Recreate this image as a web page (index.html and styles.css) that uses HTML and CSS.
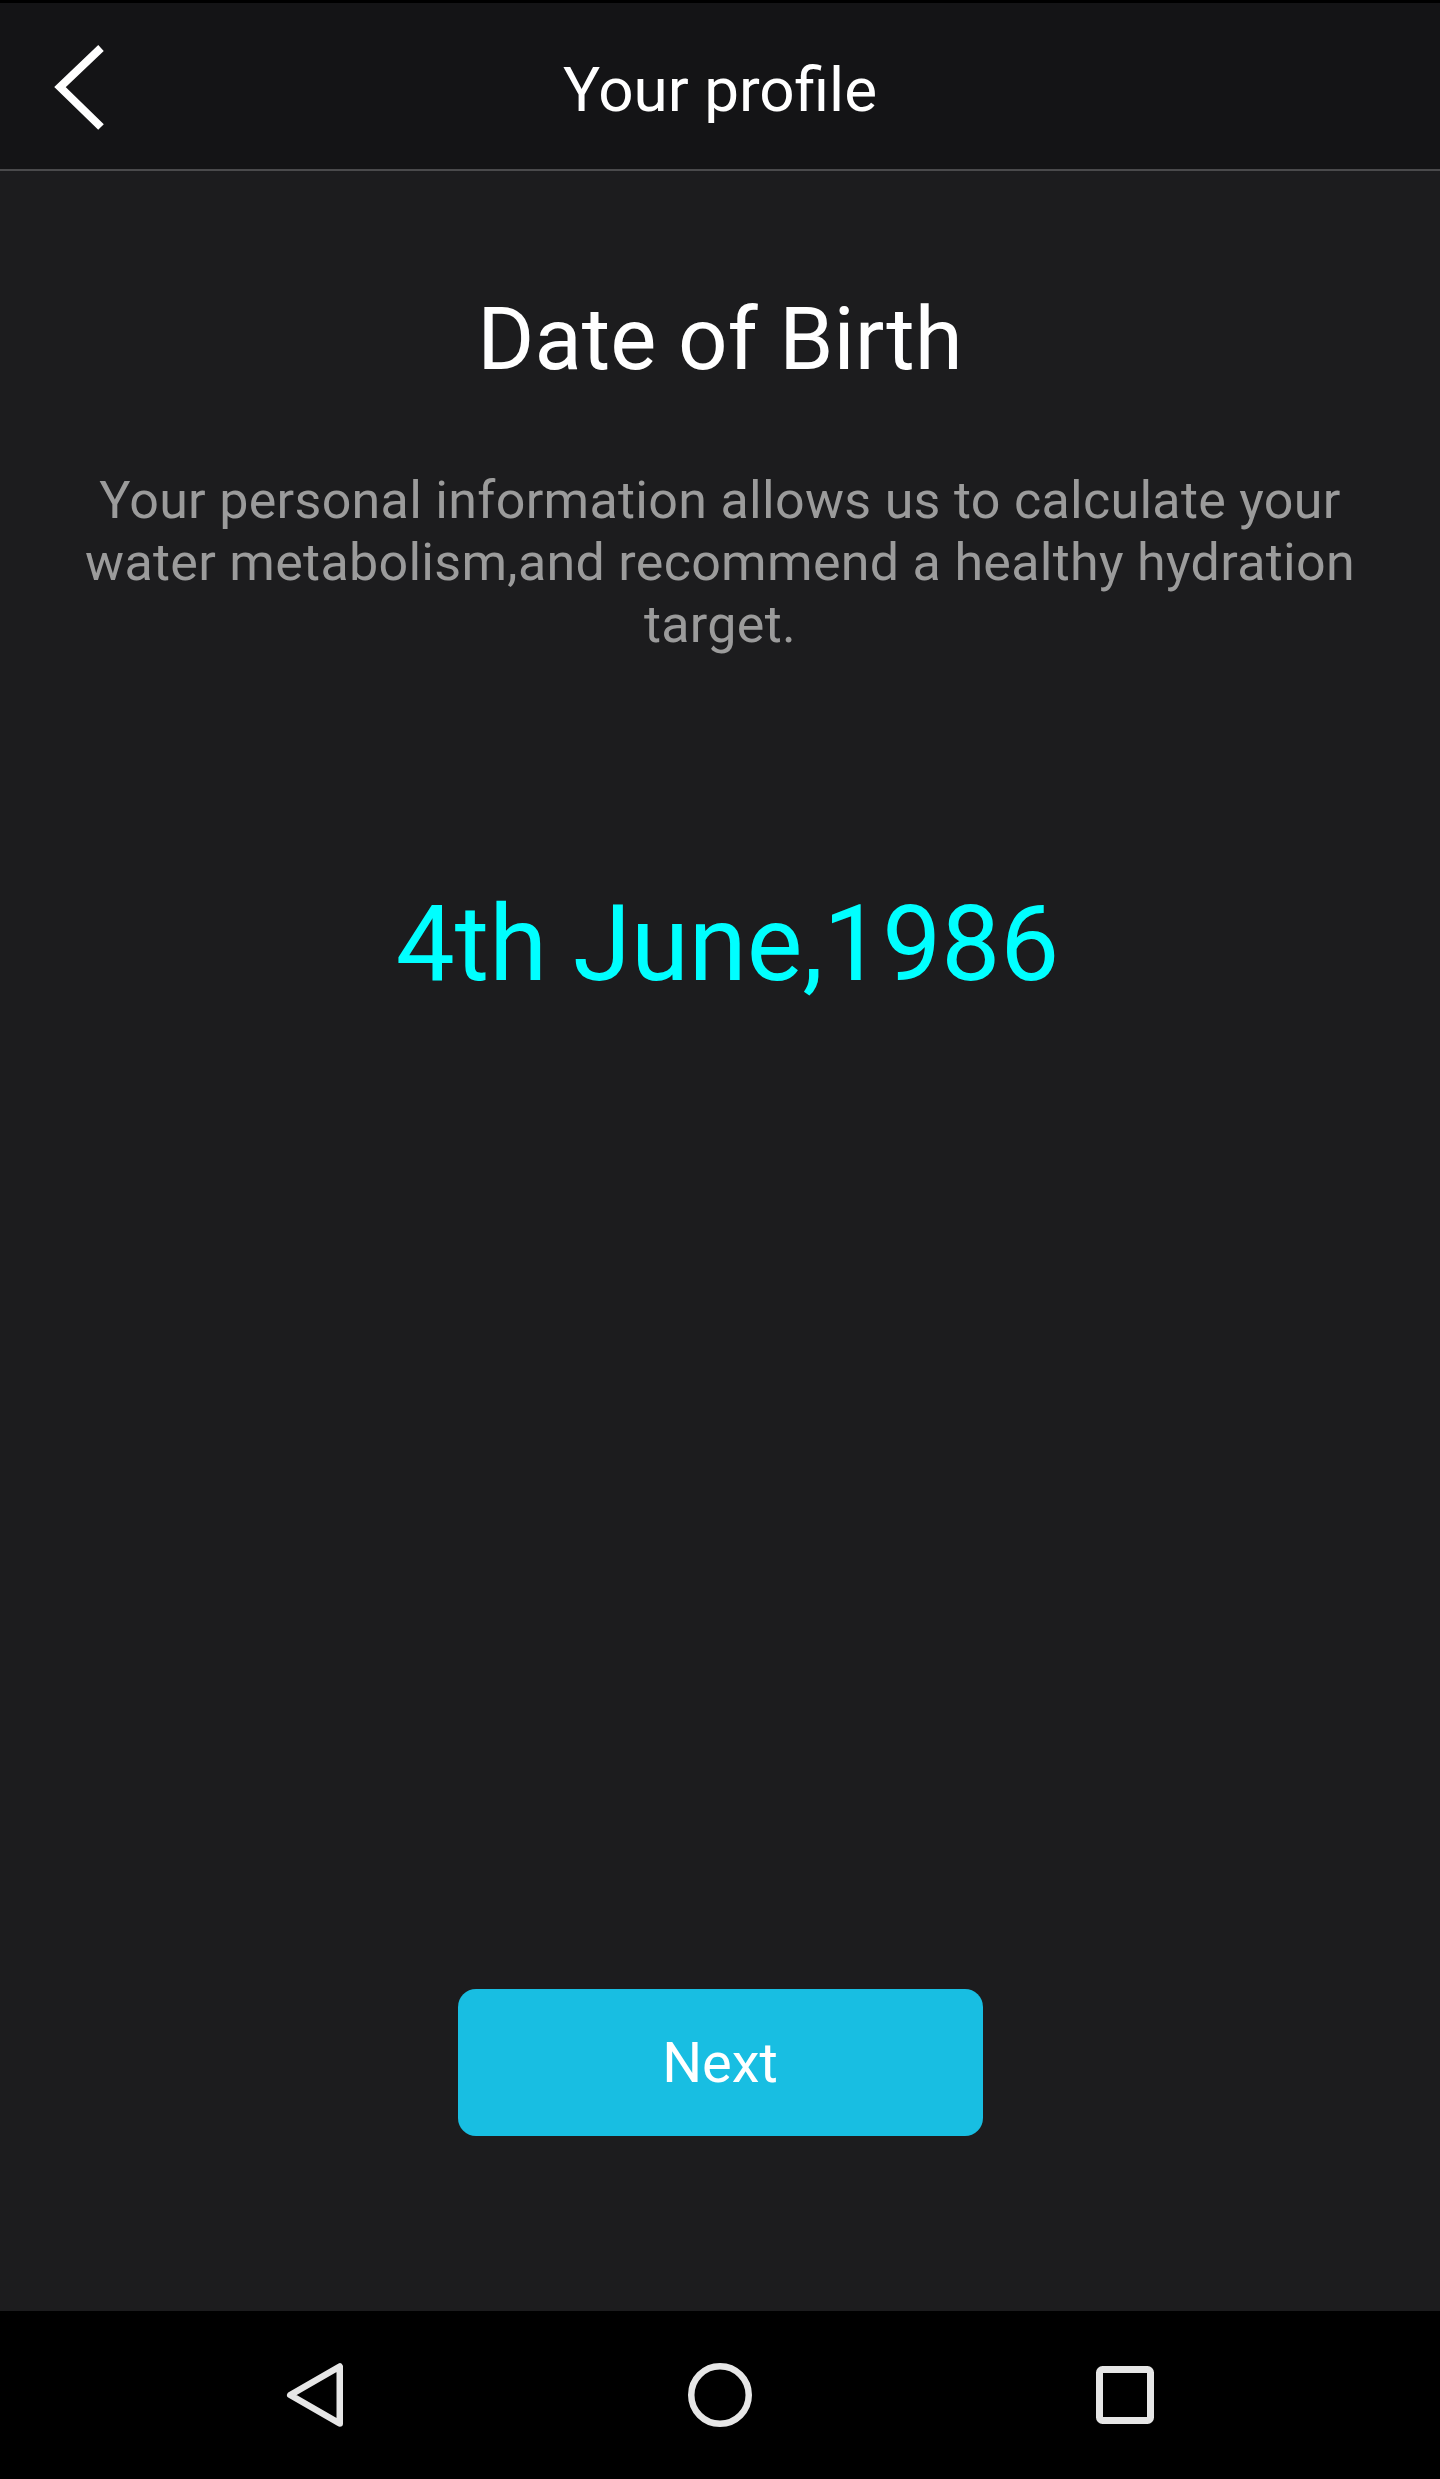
FILE: index.html
```html
<!DOCTYPE html>
<html lang="en">
<head>
<meta charset="utf-8">
<title>Your profile</title>
<link rel="stylesheet" href="styles.css">
</head>
<body>
<div class="app">
  <div class="status"></div>
  <header class="topbar">
    <svg class="back" width="70" height="100" viewBox="0 0 70 100" aria-hidden="true">
      <polyline points="54,11 13,50 54,90" fill="none" stroke="#ffffff" stroke-width="8" stroke-linecap="butt" stroke-linejoin="miter"/>
    </svg>
    <h1 class="title">Your profile</h1>
    <span class="spacer"></span>
  </header>
  <main class="content">
    <h2 class="heading">Date of Birth</h2>
    <p class="info">Your personal information allows us to calculate your water metabolism,and recommend a healthy hydration target.</p>
    <div class="date">4th June,1986</div>
    <button class="next" type="button">Next</button>
  </main>
  <nav class="navbar">
    <div class="nav-item">
      <svg width="80" height="80" viewBox="0 0 80 80" aria-hidden="true">
        <polygon points="64.75,11.5 64.75,68.5 15.25,40" fill="none" stroke="#e6e6e6" stroke-width="6.5" stroke-linejoin="round"/>
      </svg>
    </div>
    <div class="nav-item">
      <svg width="80" height="80" viewBox="0 0 80 80" aria-hidden="true">
        <circle cx="40" cy="40" r="28.75" fill="none" stroke="#e6e6e6" stroke-width="6.5"/>
      </svg>
    </div>
    <div class="nav-item">
      <svg width="80" height="80" viewBox="0 0 80 80" aria-hidden="true">
        <rect x="14.5" y="14.5" width="51" height="51" rx="3" fill="none" stroke="#e6e6e6" stroke-width="7"/>
      </svg>
    </div>
  </nav>
</div>
</body>
</html>
```

FILE: styles.css
```css
html, body {
  margin: 0;
  padding: 0;
  height: 100%;
}

body {
  background: #1c1c1e;
  font-family: Roboto, "Noto Sans", "Liberation Sans", sans-serif;
  color: #ffffff;
}

.app {
  display: flex;
  flex-direction: column;
  height: 2479px;
  width: 1440px;
}

.status {
  height: 3px;
  background: #000000;
  flex: none;
}

.topbar {
  flex: none;
  box-sizing: border-box;
  height: 168px;
  background: #141416;
  border-bottom: 2px solid #4a4a4c;
  display: grid;
  grid-template-columns: 1fr auto 1fr;
  align-items: center;
  padding-top: 6px;
}

.back {
  justify-self: start;
  align-self: start;
  margin-left: 47px;
  margin-top: 28px;
  display: block;
}

.title {
  margin: 0;
  font-size: 62px;
  font-weight: 400;
  line-height: 73px;
  color: #ffffff;
  white-space: nowrap;
}

.content {
  flex: 1;
  display: flex;
  flex-direction: column;
  align-items: center;
  background: #1c1c1e;
}

.heading {
  margin: 118px 0 0;
  font-size: 87px;
  font-weight: 400;
  line-height: 100px;
  color: #ffffff;
}

.info {
  margin: 81px 0 0;
  padding: 0 60px;
  font-size: 52px;
  letter-spacing: 0.3px;
  line-height: 62px;
  text-align: center;
  color: #9b9b9b;
}

.date {
  margin-top: 227px;
  padding-left: 15px;
  font-size: 105px;
  line-height: 124px;
  color: #00ffff;
}

.next {
  margin-top: auto;
  margin-bottom: 175px;
  width: 525px;
  height: 147px;
  border: none;
  border-radius: 18px;
  background: #18bee2;
  color: #ffffff;
  font-family: Roboto, "Noto Sans", "Liberation Sans", sans-serif;
  font-size: 56px;
  padding: 0;
}

.navbar {
  flex: none;
  height: 168px;
  background: #000000;
  display: flex;
  justify-content: center;
  align-items: center;
}

.nav-item {
  width: 405px;
  display: flex;
  justify-content: center;
  align-items: center;
}

.nav-item svg {
  display: block;
}
```
